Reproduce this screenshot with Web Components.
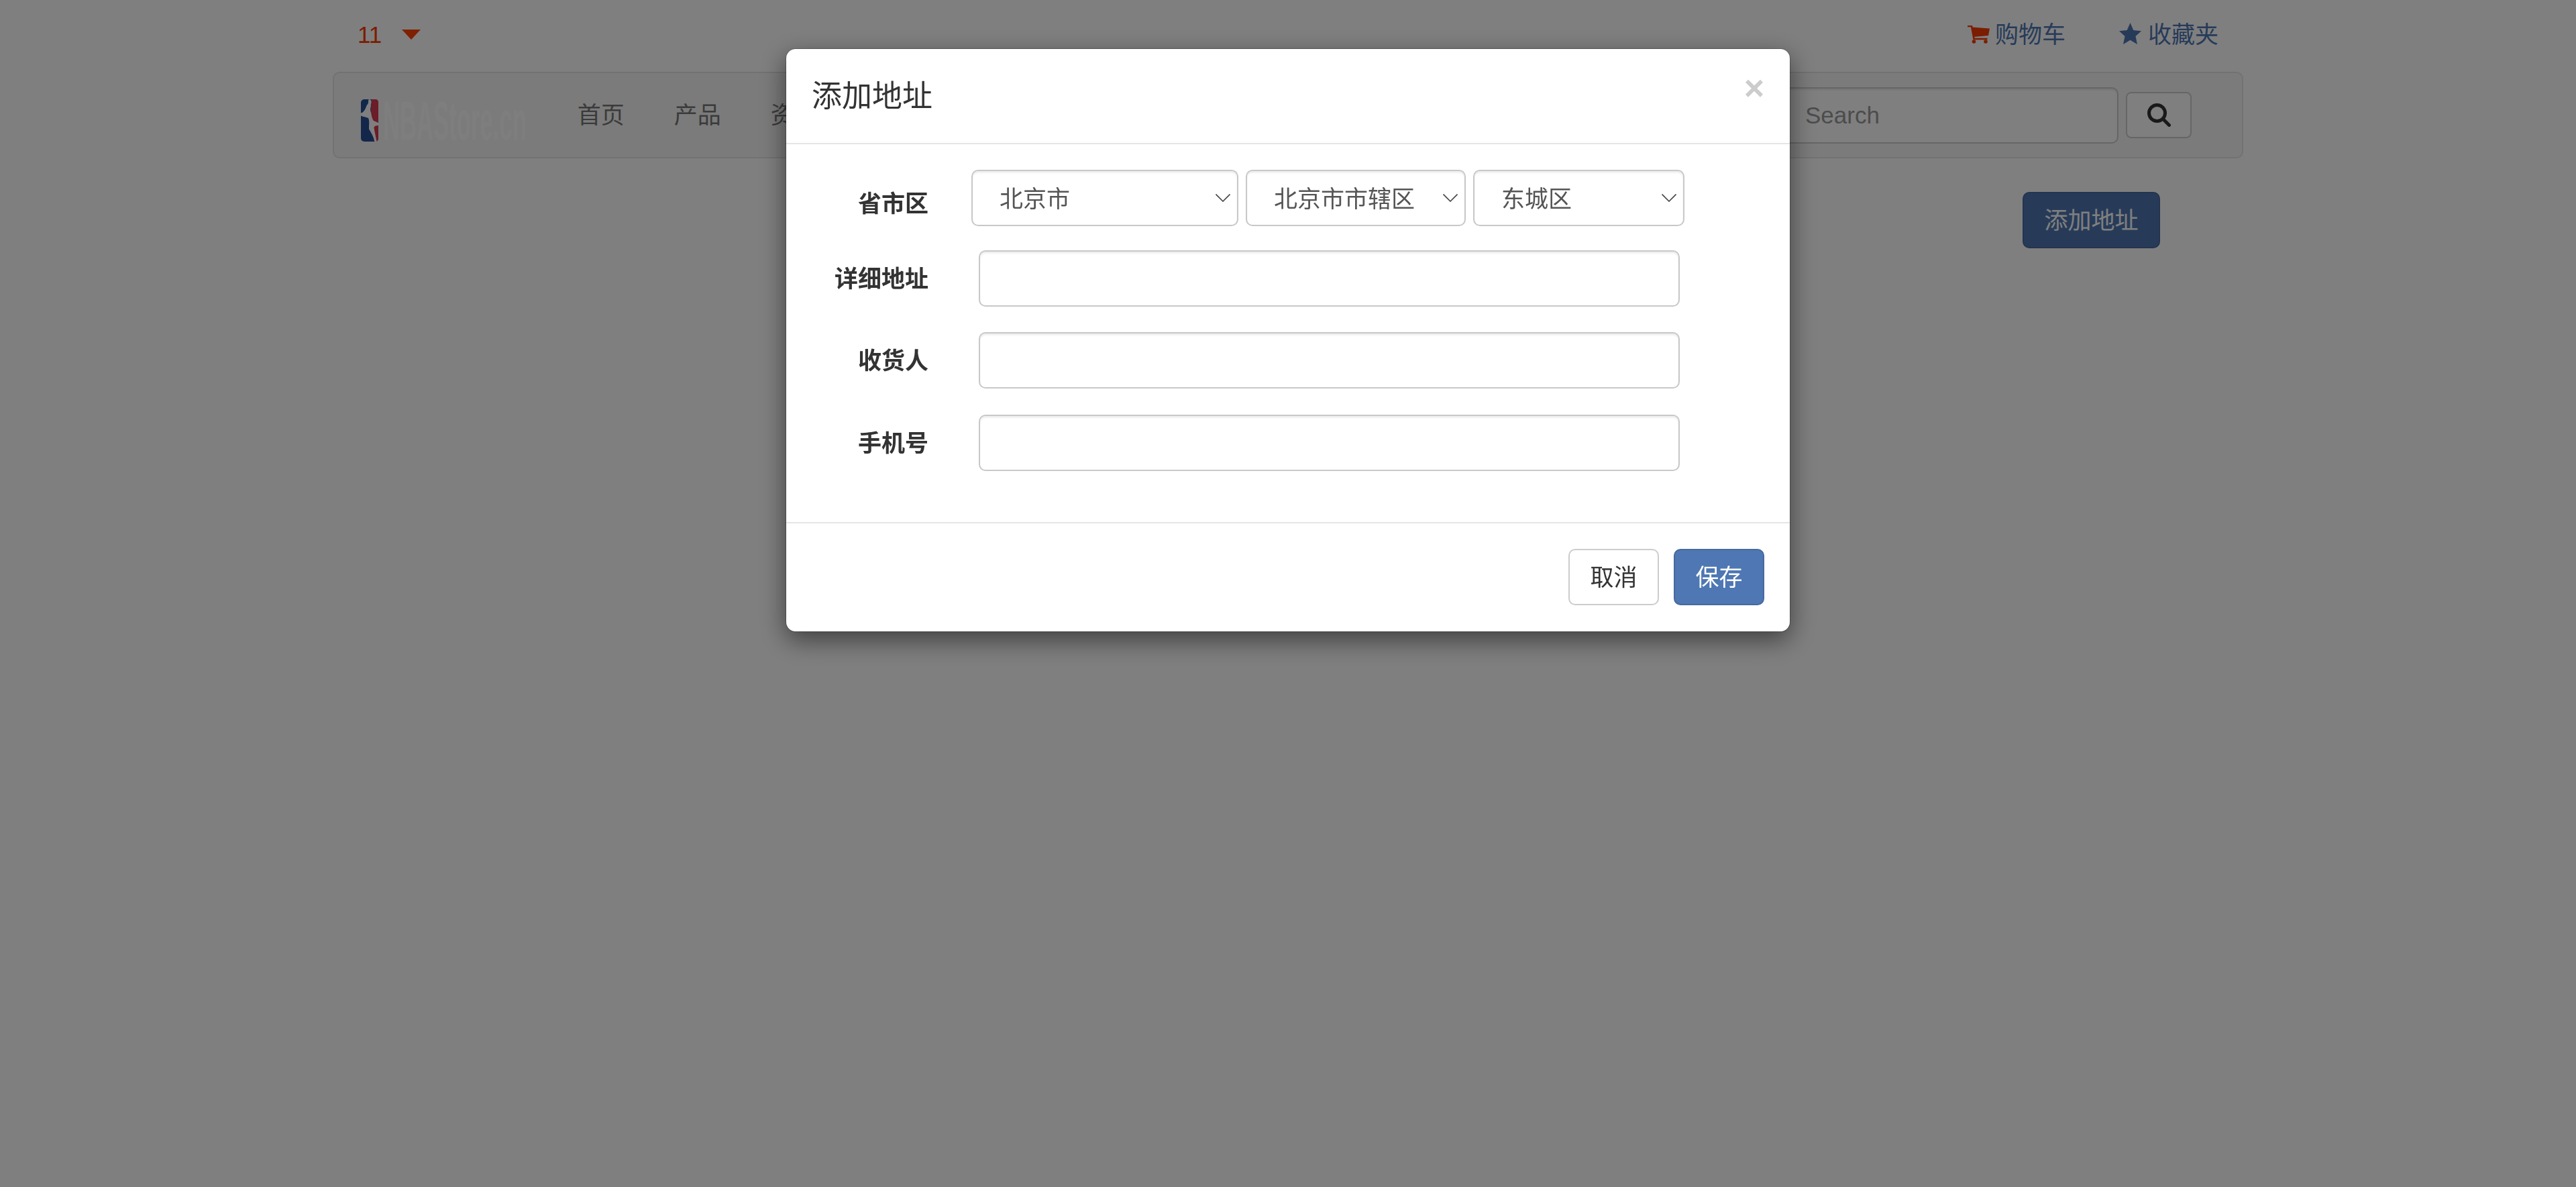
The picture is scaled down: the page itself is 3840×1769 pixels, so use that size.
<!DOCTYPE html>
<html lang="zh-CN">
<head>
<meta charset="utf-8">
<title>添加地址</title>
<style>
  html, body { margin: 0; height: 100%; overflow: hidden; background: #fff; }
  body { font: 35px/50px "Liberation Sans", "Noto Sans CJK SC", sans-serif; color: #333; }
</style>
</head>
<body>
<shop-page>
  <shop-topbar count="11"></shop-topbar>
  <shop-navbar></shop-navbar>
  <shop-toolbar><ui-button variant="primary" style="width:205px;padding:0">添加地址</ui-button></shop-toolbar>
</shop-page>

<address-modal heading="添加地址">
  <form-row label="省市区" offset="17">
    <form-select width="398" value="北京市"></form-select>
    <form-select width="328" value="北京市市辖区"></form-select>
    <form-select width="315" value="东城区"></form-select>
  </form-row>
  <form-row label="详细地址" gap="75" after="38"><text-field></text-field></form-row>
  <form-row label="收货人" gap="75" after="39"><text-field></text-field></form-row>
  <form-row label="手机号" gap="75" after="0"><text-field></text-field></form-row>
  <ui-button slot="footer">取消</ui-button>
  <ui-button slot="footer" variant="primary">保存</ui-button>
</address-modal>

<script>
(() => {
  const FONT = '"Liberation Sans", "Noto Sans CJK SC", sans-serif';

  class ShopPage extends HTMLElement {
    constructor() {
      super();
      this.attachShadow({ mode: 'open' });
      this.shadowRoot.innerHTML = `
        <style>
          :host { display: block; width: 2848px; margin: 0 auto; }
        </style>
        <slot></slot>
      `;
    }
  }

  class ShopTopbar extends HTMLElement {
    connectedCallback() {
      if (this.shadowRoot) return;
      this.attachShadow({ mode: 'open' });
      this.shadowRoot.innerHTML = `
        <style>
          :host { display: flex; justify-content: space-between; align-items: center; height: 107px; padding: 0 37px 4px 37px; box-sizing: border-box; font-family: ${FONT}; font-size: 35px; }
          .user { display: flex; align-items: center; gap: 30px; color: #f73a00; }
          .links { display: flex; gap: 80px; color: #4e77b3; }
          .link { display: flex; align-items: center; gap: 8px; }
          .star { gap: 10px; }
          .star svg { margin-top: -4px; }
          svg { display: block; }
        </style>
        <div class="user">
          <span>${this.getAttribute('count')}</span>
          <svg width="28" height="15" viewBox="0 0 28 15"><polygon points="0,0 28,0 14,15" fill="#fe4000"/></svg>
        </div>
        <div class="links">
          <div class="link">
            <svg width="33" height="27" viewBox="0 0 33 27">
              <path d="M0 1h6l3.500 19h20" fill="none" stroke="#f73a00" stroke-width="2.600"/>
              <polygon points="7,2.500 33,4.500 31,15 9,17" fill="#f73a00"/>
              <circle cx="9.500" cy="24" r="2.800" fill="#f73a00"/>
              <circle cx="27" cy="24" r="2.800" fill="#f73a00"/>
            </svg>
            <span>购物车</span>
          </div>
          <div class="link star">
            <svg width="33" height="32" viewBox="0 0 33 32"><polygon points="16.500,0 21.300,11 33,12.200 24.500,20 27,32 16.500,25.800 6,32 8.500,20 0,12.200 11.700,11" fill="#4e77b3"/></svg>
            <span>收藏夹</span>
          </div>
        </div>
      `;
    }
  }

  class ShopNavbar extends HTMLElement {
    constructor() {
      super();
      this.attachShadow({ mode: 'open' });
      this.shadowRoot.innerHTML = `
        <style>
          :host { display: flex; align-items: center; height: 129px; box-sizing: border-box; padding: 0 75px 0 40px; background: #f6f6f6; border: 2px solid #e4e4e4; border-radius: 10px; font-family: ${FONT}; font-size: 35px; }
          .brand { display: flex; gap: 7px; align-items: center; margin: 16px 76px 0 0; }
          svg { display: block; }
          /* squeezed wordmark: keeps real text, narrowed like the logo image */
          .wordmark { display: block; font-size: 82px; font-weight: 700; line-height: 62px; color: #fcfcfc; transform: scaleX(.423); transform-origin: 0 50%; margin-right: -292px; white-space: nowrap; }
          nav { display: flex; gap: 74px; color: #777; }
          .search { margin-left: auto; display: flex; align-items: center; gap: 11px; }
          .search input { width: 499px; height: 84px; box-sizing: border-box; padding: 0 30px; font: 35px ${FONT}; color: #555; background: #fff; border: 2px solid #ccc; border-radius: 10px; box-shadow: inset 0 2.500px 2.500px rgba(0,0,0,.075); outline: none; }
          .search input::placeholder { color: #999; opacity: 1; }
          .search button { width: 98px; height: 69px; display: flex; align-items: center; justify-content: center; padding: 0; background: #fff; border: 2px solid #ccc; border-radius: 8px; }
        </style>
        <div class="brand">
          <svg width="26" height="63" viewBox="0 0 26 63">
            <rect width="26" height="63" rx="5" fill="#264f96"/>
            <path d="M16 0h5q5 0 5 5v53q0 5-5 5h-1L14 30z" fill="#d63a50"/>
            <path d="M12 0C14.500 0 16 1.500 15.500 5C15 7.500 14.500 8.500 15 10C13.500 14 14 18 15.500 21C16 25 17 29 19 32L26 35V39C22.500 39 19.500 40 19.500 42.500C20.500 48 22 55 23.500 63H20.500C19 56 15 49 12 44.500C12 38 13 32 11 28C8 26.500 3 26 0 24.500V20.500C4 20 7 14 8 10.500C9 8 11 7 11 4.500C11 2.500 11 1 12 0Z" fill="#fff"/>
            <path d="M15.500 21C17 21 19 25 20 31L18.500 31.500C17 28 16 25 15.500 21Z" fill="#d63a50"/>
          </svg>
          <span class="wordmark">NBAStore.cn</span>
        </div>
        <nav><span>首页</span><span>产品</span><span>资讯</span></nav>
        <div class="search">
          <input placeholder="Search">
          <button aria-label="搜索">
            <svg width="35" height="35" viewBox="0 0 35 35" fill="none" stroke="#333" stroke-width="5" stroke-linecap="round"><circle cx="14.500" cy="14.500" r="12"/><path d="M23 23l9.500 9.500"/></svg>
          </button>
        </div>
      `;
    }
  }

  class ShopToolbar extends HTMLElement {
    constructor() {
      super();
      this.attachShadow({ mode: 'open' });
      this.shadowRoot.innerHTML = `
        <style>
          :host { display: flex; justify-content: flex-end; padding: 50px 124px 0 0; }
        </style>
        <slot></slot>
      `;
    }
  }

  class UiButton extends HTMLElement {
    constructor() {
      super();
      this.attachShadow({ mode: 'open' });
      this.shadowRoot.innerHTML = `
        <style>
          :host { display: inline-flex; align-items: center; justify-content: center; height: 84px; padding: 0 30px; box-sizing: border-box; border: 2px solid #ccc; border-radius: 10px; background: #fff; color: #333; font: 35px/1 ${FONT}; }
          :host([variant="primary"]) { background: #4e77b3; border-color: #47699e; color: #fff; }
        </style>
        <slot></slot>
      `;
    }
  }

  class FormRow extends HTMLElement {
    connectedCallback() {
      if (this.shadowRoot) return;
      const gap = this.getAttribute('gap') || 64;
      const after = this.getAttribute('after') || 36;
      const offset = this.getAttribute('offset') || 2;
      this.attachShadow({ mode: 'open' });
      this.shadowRoot.innerHTML = `
        <style>
          :host { display: flex; align-items: center; margin-bottom: ${after}px; font: 35px/50px ${FONT}; }
          label { width: 212px; flex: none; text-align: right; font-weight: 700; color: #333; padding-top: ${offset}px; }
          .field { display: flex; gap: 11px; margin-left: ${gap}px; }
        </style>
        <label>${this.getAttribute('label')}</label>
        <div class="field"><slot></slot></div>
      `;
    }
  }

  class FormSelect extends HTMLElement {
    connectedCallback() {
      if (this.shadowRoot) return;
      const value = this.getAttribute('value');
      this.attachShadow({ mode: 'open' });
      this.shadowRoot.innerHTML = `
        <style>
          :host { display: block; position: relative; width: ${this.getAttribute('width')}px; height: 84px; }
          select { appearance: none; -webkit-appearance: none; width: 100%; height: 100%; box-sizing: border-box; padding: 2px 40px 0; font: 35px ${FONT}; color: #555; background: #fff; border: 2px solid #c8c8c8; border-radius: 10px; box-shadow: inset 0 2.500px 2.500px rgba(0,0,0,.075); outline: none; }
          svg { position: absolute; right: 12px; top: 36px; }
        </style>
        <select><option>${value}</option></select>
        <svg width="22" height="12" viewBox="0 0 22 12" fill="none" stroke="#444" stroke-width="1.600"><path d="M.5.5L11 11 21.500.5"/></svg>
      `;
    }
  }

  class TextField extends HTMLElement {
    constructor() {
      super();
      this.attachShadow({ mode: 'open' });
      this.shadowRoot.innerHTML = `
        <style>
          :host { display: block; width: 1045px; height: 84px; }
          input { width: 100%; height: 100%; box-sizing: border-box; padding: 0 30px; font: 35px ${FONT}; color: #555; background: #fff; border: 2px solid #c8c8c8; border-radius: 10px; box-shadow: inset 0 2.500px 2.500px rgba(0,0,0,.075); outline: none; }
        </style>
        <input type="text">
      `;
    }
  }

  // backdrop + dialog: lies over the whole page
  class AddressModal extends HTMLElement {
    connectedCallback() {
      if (this.shadowRoot) return;
      this.attachShadow({ mode: 'open' });
      this.shadowRoot.innerHTML = `
        <style>
          :host { position: fixed; inset: 0; display: block; background: rgba(0,0,0,.5); font-family: ${FONT}; }
          .dialog { width: 1498px; box-sizing: border-box; margin: 72px auto 0; background: #fff; background-clip: padding-box; border: 1px solid rgba(0,0,0,.2); border-radius: 15px; box-shadow: 0 12px 37px rgba(0,0,0,.5); }
          header { display: flex; justify-content: space-between; align-items: flex-start; height: 142px; box-sizing: border-box; padding: 39px 38px 0; border-bottom: 2px solid #e5e5e5; }
          h4 { margin: 0; font-size: 45px; line-height: 64px; font-weight: 400; color: #333; }
          .close { font: 700 52px/52px "Liberation Sans", sans-serif; color: #ccc; margin-top: -7px; }
          .body { padding: 38px 0 76px; }
          footer { display: flex; justify-content: flex-end; gap: 22px; padding: 38px 38px 39px; border-top: 2px solid #e5e5e5; }
          ::slotted(ui-button) { width: 135px; padding: 0; }
        </style>
        <div class="dialog">
          <header><h4>${this.getAttribute('heading')}</h4><span class="close">×</span></header>
          <div class="body"><slot></slot></div>
          <footer><slot name="footer"></slot></footer>
        </div>
      `;
    }
  }

  customElements.define('shop-page', ShopPage);
  customElements.define('shop-topbar', ShopTopbar);
  customElements.define('shop-navbar', ShopNavbar);
  customElements.define('shop-toolbar', ShopToolbar);
  customElements.define('ui-button', UiButton);
  customElements.define('form-row', FormRow);
  customElements.define('form-select', FormSelect);
  customElements.define('text-field', TextField);
  customElements.define('address-modal', AddressModal);
})();
</script>
</body>
</html>
